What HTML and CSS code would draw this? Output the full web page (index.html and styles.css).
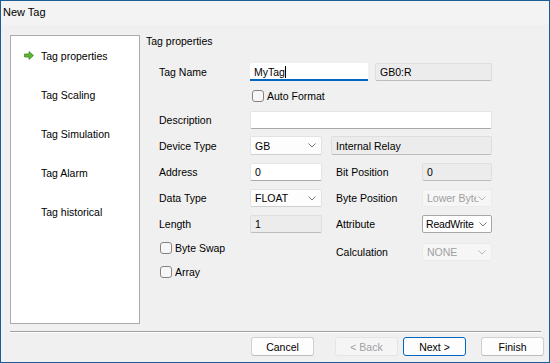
FILE: index.html
```html
<!DOCTYPE html>
<html>
<head>
<meta charset="utf-8">
<link rel="stylesheet" href="styles.css">
</head>
<body>
<div class="window">
  <div class="titlebar">New Tag</div>
  <div class="main">
    <div class="nav">
      <div class="nav-item active">
        <svg class="arrow" width="10" height="9" viewBox="0 0 10 9"><path d="M0.5 3 H5 V0.5 L9.5 4.5 L5 8.5 V6 H0.5 Z" fill="#5fb336" stroke="#3e8e22" stroke-width="0.8"/></svg>
        <span>Tag properties</span>
      </div>
      <div class="nav-item"><span>Tag Scaling</span></div>
      <div class="nav-item"><span>Tag Simulation</span></div>
      <div class="nav-item"><span>Tag Alarm</span></div>
      <div class="nav-item"><span>Tag historical</span></div>
    </div>
    <div class="content">
      <div class="heading">Tag properties</div>
      <div class="form">
        <div class="row r-tag">
          <div class="label">Tag Name</div>
          <div class="edit focused w118">MyTag<span class="caret"></span></div>
          <div class="edit readonly w117 ml7">GB0:R</div>
        </div>
        <div class="row r-auto">
          <div class="check-wrap ind"><span class="check"></span><span>Auto Format</span></div>
        </div>
        <div class="row r-desc">
          <div class="label">Description</div>
          <div class="edit w242"></div>
        </div>
        <div class="row r-dev">
          <div class="label">Device Type</div>
          <div class="edit combo w72 h19">GB<svg class="chev" width="8" height="5" viewBox="0 0 8 5"><polyline points="0.5,0.5 4,4 7.5,0.5" fill="none" stroke="#7a7a7a" stroke-width="1"/></svg></div>
          <div class="edit readonly w161 ml9 h19">Internal Relay</div>
        </div>
        <div class="row">
          <div class="label">Address</div>
          <div class="edit w72">0</div>
          <div class="label2">Bit Position</div>
          <div class="edit readonly w70">0</div>
        </div>
        <div class="row">
          <div class="label">Data Type</div>
          <div class="edit combo w72">FLOAT<svg class="chev" width="8" height="5" viewBox="0 0 8 5"><polyline points="0.5,0.5 4,4 7.5,0.5" fill="none" stroke="#7a7a7a" stroke-width="1"/></svg></div>
          <div class="label2">Byte Position</div>
          <div class="edit combo disabled w70">Lower Byte<svg class="chev" width="8" height="5" viewBox="0 0 8 5"><polyline points="0.5,0.5 4,4 7.5,0.5" fill="none" stroke="#b8b8b8" stroke-width="1"/></svg></div>
        </div>
        <div class="row">
          <div class="label">Length</div>
          <div class="edit readonly w72">1</div>
          <div class="label2">Attribute</div>
          <div class="edit combo framed w70 tight">ReadWrite<svg class="chev" width="8" height="5" viewBox="0 0 8 5"><polyline points="0.5,0.5 4,4 7.5,0.5" fill="none" stroke="#7a7a7a" stroke-width="1"/></svg></div>
        </div>
        <div class="last">
          <div class="last-left">
            <div class="check-wrap"><span class="check"></span><span>Byte Swap</span></div>
            <div class="check-wrap"><span class="check"></span><span>Array</span></div>
          </div>
          <div class="last-right">
            <div class="label2 noml">Calculation</div>
            <div class="edit combo disabled w70">NONE<svg class="chev" width="8" height="5" viewBox="0 0 8 5"><polyline points="0.5,0.5 4,4 7.5,0.5" fill="none" stroke="#b8b8b8" stroke-width="1"/></svg></div>
          </div>
        </div>
      </div>
    </div>
  </div>
  <div class="sep"></div>
  <div class="footer">
    <div class="btn">Cancel</div>
    <div class="btn disabled ml21">&lt; Back</div>
    <div class="btn default ml5">Next &gt;</div>
    <div class="btn ml15">Finish</div>
  </div>
</div>
</body>
</html>
```
FILE: styles.css
```css
* { box-sizing: border-box; }
html, body { margin: 0; padding: 0; background: #f0f0f0; }
body {
  font-family: "Liberation Sans", Arial, sans-serif;
  font-size: 10.5px;
  color: #000;
}
.window {
  width: 550px;
  height: 363px;
  border: 1px solid #1b5c99;
  background: #f0f0f0;
  display: flex;
  flex-direction: column;
}
.titlebar {
  height: 24px;
  line-height: 22px;
  padding-left: 2px;
  background: #f3f3f3;
  font-size: 11px;
}
.main {
  display: flex;
  padding: 10px 0 0 9px;
  height: 299px;
}
.nav {
  width: 130px;
  height: 289px;
  background: #fff;
  border: 1px solid #acacac;
}
.nav-item {
  height: 39px;
  display: flex;
  align-items: center;
  padding-left: 30px;
  position: relative;
}
.nav-item .arrow {
  position: absolute;
  left: 13px;
  top: 15px;
}
.content {
  margin-left: 6px;
  flex: 1;
}
.heading {
  line-height: 12px;
  height: 12px;
}
.form {
  margin-left: 13px;
  margin-top: 16px;
  display: flex;
  flex-direction: column;
}
.row {
  display: flex;
  align-items: center;
  height: 18px;
  margin-bottom: 8px;
}
.row.r-tag { margin-bottom: 6px; }
.row.r-auto { margin-bottom: 6px; }
.row.r-desc { margin-bottom: 7px; }
.row.r-dev { height: 19px; margin-bottom: 8px; }
.label { width: 91px; }
.label2 { width: 86px; margin-left: 14px; }
.label2.noml { margin-left: 0; }
.edit {
  height: 18px;
  background: #fff;
  border: 1px solid #e4e4e4;
  border-bottom-color: #a8a8a8;
  border-radius: 2px;
  padding-left: 4px;
  display: flex;
  align-items: center;
  position: relative;
  white-space: nowrap;
  overflow: hidden;
}
.edit.h19 { height: 19px; }
.edit.tight { padding-left: 3px; letter-spacing: -0.2px; }
.edit.focused {
  border: none;
  border-bottom: 2px solid #0067c0;
  border-radius: 2px 2px 0 0;
  padding-top: 1px;
}
.caret {
  display: inline-block;
  width: 1px;
  height: 12px;
  background: #000;
}
.edit.readonly {
  background: #ececec;
  border-color: #dedede;
  border-bottom-color: #bdbdbd;
}
.edit.combo {
  background: #fdfdfd;
  border-color: #e2e2e2;
  border-bottom-color: #cfcfcf;
}
.edit.combo.framed {
  background: #fff;
  border-color: #a6a6a6;
}
.edit.combo.disabled {
  background: #f6f6f6;
  border-color: #ebebeb;
  color: #a0a0a0;
}
.chev {
  position: absolute;
  right: 5px;
  top: 6px;
}
.edit.combo.disabled .chev,
.edit.combo.framed .chev { padding-left: 2px; box-sizing: content-box; }
.edit.combo.disabled .chev { background: #f6f6f6; }
.edit.combo.framed .chev { background: #fff; right: 4px; }
.w72 { width: 72px; }
.w70 { width: 70px; }
.w118 { width: 118px; }
.w117 { width: 117px; }
.w161 { width: 161px; }
.w242 { width: 242px; }
.ml7 { margin-left: 7px; }
.ml9 { margin-left: 9px; }
.check-wrap {
  display: flex;
  align-items: center;
  height: 14px;
}
.check-wrap.ind { margin-left: 93px; height: 18px; }
.check {
  width: 12px;
  height: 12px;
  border: 1px solid #858585;
  border-radius: 3px;
  background: #f7f7f7;
  margin-right: 3px;
}
.last {
  display: flex;
}
.last-left {
  width: 177px;
  padding-left: 1px;
  display: flex;
  flex-direction: column;
  gap: 10px;
}
.last-right {
  display: flex;
  align-items: center;
  height: 18px;
  margin-top: 2px;
}
.sep {
  margin: 7px 8px 0 9px;
  height: 2px;
  border-top: 1px solid #a0a0a0;
  border-bottom: 1px solid #ffffff;
}
.footer {
  display: flex;
  padding-left: 250px;
  margin-top: 4px;
}
.btn {
  width: 63px;
  height: 19px;
  border: 1px solid #d0d0d0;
  border-bottom-color: #bcbcbc;
  border-radius: 3px;
  background: #fdfdfd;
  display: flex;
  align-items: center;
  justify-content: center;
}
.btn.disabled {
  background: #f5f5f5;
  border-color: #e5e5e5;
  color: #a0a0a0;
}
.btn.default {
  border: 1px solid #0067c0;
}
.ml21 { margin-left: 21px; }
.ml5 { margin-left: 5px; }
.ml15 { margin-left: 15px; }
```
